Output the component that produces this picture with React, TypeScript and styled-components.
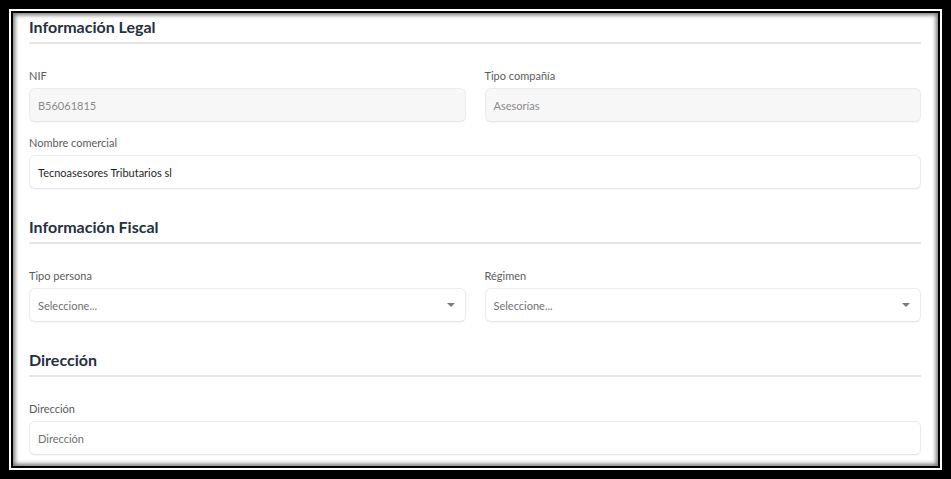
import React from "react";
import styled, { createGlobalStyle } from "styled-components";

const Global = createGlobalStyle`
  html, body { margin: 0; padding: 0; background: #000; }
  body { font-family: "Lato", "Noto Sans", sans-serif; }
  * { box-sizing: border-box; }
`;

const Frame = styled.div`
  width: 951px;
  height: 479px;
  padding: 9px;
  background: #000;
`;

const WhiteRing = styled.div`
  height: 100%;
  border: 2px solid #fff;
`;

const BlackRing = styled.div`
  height: 100%;
  border: 2px solid #000;
  background: #000;
`;

const Content = styled.div`
  height: 100%;
  overflow: hidden;
  background: #fff;
  box-shadow: inset 0 0 4px 2px rgba(0, 0, 0, 0.55);
  padding: 4px 17px 0 16px;
  display: flex;
  flex-direction: column;
`;

const Section = styled.section`
  display: flex;
  flex-direction: column;
  & + & { margin-top: 28px; }
`;

const Heading = styled.h2`
  margin: 0;
  font-size: 16px;
  line-height: 20px;
  font-weight: 700;
  color: #24303f;
  padding-bottom: 5px;
  border-bottom: 2px solid #e6e6e6;
`;

const Grid = styled.div<{ $cols: number }>`
  display: grid;
  grid-template-columns: repeat(${(p) => p.$cols}, 1fr);
  column-gap: 19px;
  margin-top: 25px;
  & + & { margin-top: 14px; }
`;

const Field = styled.div`
  display: flex;
  flex-direction: column;
`;

const Label = styled.label`
  font-size: 11px;
  line-height: 14px;
  color: #5b5b5b;
  margin-bottom: 5px;
`;

const Input = styled.div<{ $disabled?: boolean; $tone: "value" | "muted" }>`
  position: relative;
  height: 34px;
  border: 1px solid #e9ecf0;
  border-bottom-color: #e2e7ef;
  border-radius: 6px;
  background: ${(p) => (p.$disabled ? "#f7f7f7" : "#fff")};
  box-shadow: 0 1px 2px rgba(0, 0, 0, 0.04);
  padding: 0 8px;
  display: flex;
  align-items: center;
  font-size: 11px;
  color: ${(p) => (p.$tone === "value" ? "#1f1f1f" : p.$disabled ? "#8a8a8a" : "#707070")};
`;

const Caret = styled.span`
  position: absolute;
  right: 10px;
  top: 50%;
  margin-top: -2px;
  width: 0;
  height: 0;
  border-left: 4px solid transparent;
  border-right: 4px solid transparent;
  border-top: 4px solid #7a7a7a;
`;

export default function App() {
  return (
    <>
      <Global />
      <Frame>
        <WhiteRing>
          <BlackRing>
            <Content>
              <Section>
                <Heading>Información Legal</Heading>
                <Grid $cols={2}>
                  <Field>
                    <Label>NIF</Label>
                    <Input $disabled $tone="muted">B56061815</Input>
                  </Field>
                  <Field>
                    <Label>Tipo compañía</Label>
                    <Input $disabled $tone="muted">Asesorías</Input>
                  </Field>
                </Grid>
                <Grid $cols={1}>
                  <Field>
                    <Label>Nombre comercial</Label>
                    <Input $tone="value">Tecnoasesores Tributarios sl</Input>
                  </Field>
                </Grid>
              </Section>
              <Section>
                <Heading>Información Fiscal</Heading>
                <Grid $cols={2}>
                  <Field>
                    <Label>Tipo persona</Label>
                    <Input $tone="muted">
                      Seleccione...
                      <Caret />
                    </Input>
                  </Field>
                  <Field>
                    <Label>Régimen</Label>
                    <Input $tone="muted">
                      Seleccione...
                      <Caret />
                    </Input>
                  </Field>
                </Grid>
              </Section>
              <Section>
                <Heading>Dirección</Heading>
                <Grid $cols={1}>
                  <Field>
                    <Label>Dirección</Label>
                    <Input $tone="muted">Dirección</Input>
                  </Field>
                </Grid>
              </Section>
            </Content>
          </BlackRing>
        </WhiteRing>
      </Frame>
    </>
  );
}
